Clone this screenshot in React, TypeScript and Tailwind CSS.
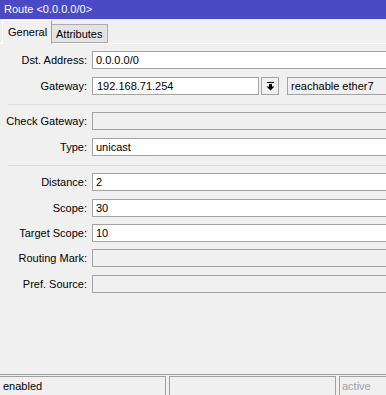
import type { ReactNode } from "react"

type FieldProps = {
  label: string
  value?: string
  disabled?: boolean
  className?: string
  children?: ReactNode
}

// one label + text box row of the route form
function Field({ label, value, disabled, className = "", children }: FieldProps) {
  return (
    <div className={`flex h-[18px] items-center ${className}`}>
      <div className="w-[87px] shrink-0 text-right leading-none">{label}</div>
      <div className="ml-[5px] flex flex-1 items-center">
        {children ?? (
          <div
            className={`flex h-[18px] w-[320px] shrink-0 items-center border border-[#a3a3a3] pl-[3px] leading-none ${
              disabled ? "bg-[#f0f0f0]" : "bg-white"
            }`}
          >
            {value}
          </div>
        )}
      </div>
    </div>
  )
}

function Separator({ className = "" }: { className?: string }) {
  return <div className={`ml-[8px] h-px bg-[#dcdcdc] ${className}`} />
}

export default function App() {
  return (
    <div className="flex h-[395px] w-[386px] flex-col overflow-hidden bg-[#f0f0f0] font-['Liberation_Sans',Arial,sans-serif] text-[11px] text-black">
      {/* title bar */}
      <div className="flex h-[19px] items-center bg-[#4a4ac7] pl-[4px] text-white">Route &lt;0.0.0.0/0&gt;</div>

      {/* tabs */}
      <div className="flex h-[25px] items-end border-b border-white pl-[2px]">
        <div className="-mb-px flex h-[24px] w-[50px] shrink-0 items-center border-l border-t border-r border-l-white border-t-white border-r-[#a0a0a0] bg-[#f0f0f0] pl-[5px] pb-[1px] whitespace-nowrap">
          General
        </div>
        <div className="flex h-[19px] w-[56px] shrink-0 items-center border border-l-0 border-[#acacac] bg-[#e3e3e3] pl-[4px] pt-px whitespace-nowrap">
          Attributes
        </div>
      </div>

      {/* form */}
      <div className="flex flex-1 flex-col pt-[7px]">
        <Field label="Dst. Address:" value="0.0.0.0/0" />
        <Field label="Gateway:" className="mt-[8px]">
          <div className="flex h-[18px] w-[167px] shrink-0 items-center border border-[#a3a3a3] bg-white pl-[4px] leading-none">
            192.168.71.254
          </div>
          <div className="ml-[2px] flex h-[18px] w-[18px] shrink-0 items-center justify-center border border-[#a3a3a3] bg-[#f0f0f0]">
            <svg width="9" height="9" viewBox="0 0 9 9">
              <rect x="1" y="0" width="7" height="1" fill="#000" />
              <rect x="3" y="2" width="3" height="3" fill="#000" />
              <polygon points="0.5,4.5 8.5,4.5 4.5,8.5" fill="#000" />
            </svg>
          </div>
          <div className="ml-[8px] flex h-[18px] w-[120px] shrink-0 items-center border border-[#a3a3a3] bg-[#f0f0f0] pl-[3px] leading-none">
            reachable ether7
          </div>
        </Field>

        <Separator className="mt-[9px]" />
        <Field label="Check Gateway:" disabled className="mt-[7px]" />
        <Field label="Type:" value="unicast" className="mt-[8px]" />

        <Separator className="mt-[9px]" />
        <Field label="Distance:" value="2" className="mt-[7px]" />
        <Field label="Scope:" value="30" className="mt-[8px]" />
        <Field label="Target Scope:" value="10" className="mt-[7px]" />
        <Field label="Routing Mark:" disabled className="mt-[7px]" />
        <Field label="Pref. Source:" disabled className="mt-[8px]" />
      </div>

      {/* status bar */}
      <div className="flex h-[21px] border-t border-[#a0a0a0] pt-[1px]">
        <div className="flex w-[166px] items-center border-t border-r border-[#a0a0a0] pl-[3px]">enabled</div>
        <div className="ml-[3px] w-[167px] border-t border-l border-r border-[#a0a0a0]" />
        <div className="ml-[3px] flex flex-1 items-center border-t border-l border-[#a0a0a0] pl-[2px] text-[#a0a0a0]">
          active
        </div>
      </div>
    </div>
  )
}
